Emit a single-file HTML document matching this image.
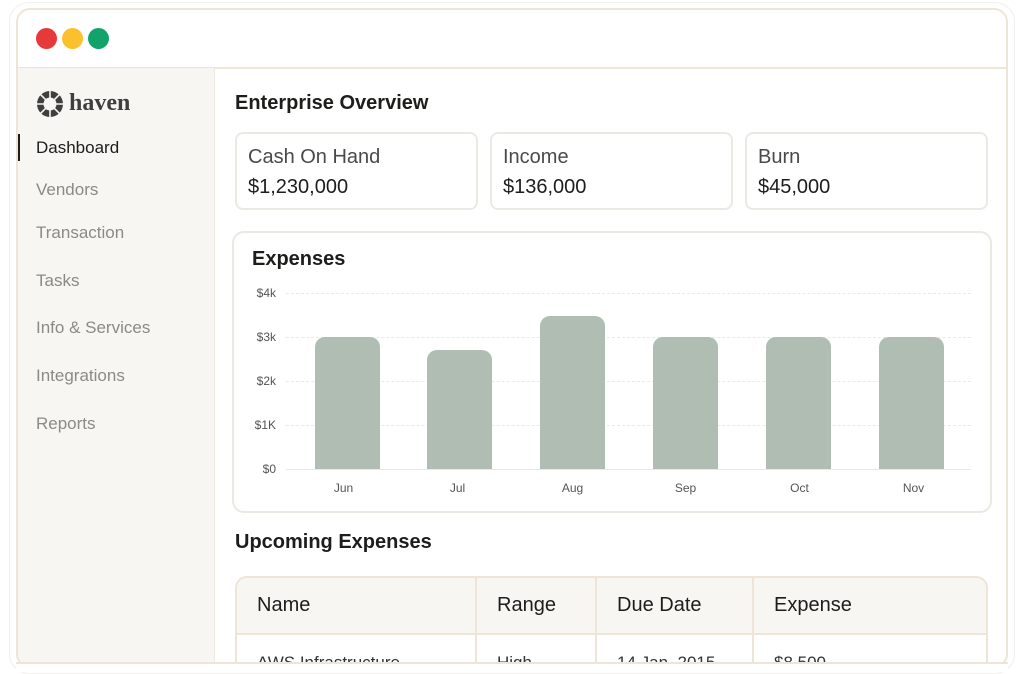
<!DOCTYPE html>
<html><head><meta charset="utf-8"><style>
*{margin:0;padding:0;box-sizing:border-box}
body{width:1024px;height:672px;background:#fff;font-family:"Liberation Sans",sans-serif;position:relative;overflow:hidden}
.abs{position:absolute}
.win{left:16px;top:8px;width:992px;height:660px;border:2px solid #efe4d8;border-radius:14px;background:#fff;overflow:hidden}
.outer{left:9px;top:2px;width:1006px;height:672px;border:1px solid #f1efec;border-radius:20px}
.side{left:0;top:58px;width:197px;height:620px;background:#f8f6f2;border-right:1px solid #efe8df}
.nav{left:18px;font-size:17px;color:#8a8a87}
.card{border:2px solid #ece9e4;border-radius:8px;background:#fff}
.card .l{position:absolute;left:11px;top:12px;font-size:20px;color:#4a4a48}
.card .v{position:absolute;left:11px;top:42px;font-size:20px;color:#1d1d1b}
.grid{left:286px;width:685px;border-top:1px dashed #f3e6dc}
.yl{font-size:12px;color:#555;width:40px;text-align:right;left:236px}
.bar{background:#afbdb3;border-radius:10px 10px 0 0;width:65px}
.xl{font-size:12px;color:#555;width:65px;text-align:center;top:481px}
.h{font-size:20px;color:#1d1d1b;font-weight:bold}
th{font-weight:normal;text-align:left;font-size:20px;color:#1d1d1b;padding-left:20px;height:56px;background:#f8f6f2;border-right:2px solid #efe4d8;border-bottom:2px solid #efe4d8}
td{font-size:17px;color:#333;padding-left:20px;padding-top:18px;border-right:2px solid #efe4d8;vertical-align:top}
</style></head><body>
<div class="abs outer"></div>
<div class="abs win">
 <div class="abs" style="left:18px;top:18px;width:21px;height:21px;border-radius:50%;background:#e5393a"></div>
 <div class="abs" style="left:44px;top:18px;width:21px;height:21px;border-radius:50%;background:#fbc02d"></div>
 <div class="abs" style="left:70px;top:18px;width:21px;height:21px;border-radius:50%;background:#12a36a"></div>
 <div class="abs" style="left:0;top:57px;width:992px;height:2px;background:#efe4d8"></div>
 <div class="abs side">
  <svg class="abs" style="left:18px;top:22px" width="28" height="28" viewBox="0 0 28 28"><circle cx="14" cy="14" r="13" fill="#3f3f3d"/><circle cx="14" cy="14" r="6.5" fill="#f8f6f2"/><g stroke="#f8f6f2" stroke-width="1.6"><line x1="14" y1="0" x2="14" y2="8"/><line x1="14" y1="20" x2="14" y2="28"/><line x1="0" y1="14" x2="8" y2="14"/><line x1="20" y1="14" x2="28" y2="14"/><line x1="4" y1="4" x2="9.8" y2="9.8"/><line x1="18.2" y1="18.2" x2="24" y2="24"/><line x1="24" y1="4" x2="18.2" y2="9.8"/><line x1="4" y1="24" x2="9.8" y2="18.2"/></g></svg>
  <div class="abs" style="left:51px;top:22px;font-family:'Liberation Serif',serif;font-weight:bold;font-size:24px;color:#3f3f3d">haven</div>
  <div class="abs" style="left:0;top:66px;width:2px;height:27px;background:#1d1d1b"></div>
  <div class="abs nav" style="top:70px;color:#1d1d1b">Dashboard</div>
  <div class="abs nav" style="top:112px">Vendors</div>
  <div class="abs nav" style="top:155px">Transaction</div>
  <div class="abs nav" style="top:203px">Tasks</div>
  <div class="abs nav" style="top:250px">Info &amp; Services</div>
  <div class="abs nav" style="top:298px">Integrations</div>
  <div class="abs nav" style="top:346px">Reports</div>
 </div>
</div>
<div class="abs h" style="left:235px;top:92px">Enterprise Overview</div>
<div class="abs card" style="left:235px;top:132px;width:243px;height:78px"><div class="l">Cash On Hand</div><div class="v">$1,230,000</div></div>
<div class="abs card" style="left:490px;top:132px;width:243px;height:78px"><div class="l">Income</div><div class="v">$136,000</div></div>
<div class="abs card" style="left:745px;top:132px;width:243px;height:78px"><div class="l">Burn</div><div class="v">$45,000</div></div>
<div class="abs card" style="left:232px;top:231px;width:760px;height:282px;border-radius:12px"></div>
<div class="abs h" style="left:252px;top:248px">Expenses</div>
<div class="abs grid" style="top:293px"></div><div class="abs grid" style="top:337px"></div><div class="abs grid" style="top:381px"></div><div class="abs grid" style="top:425px"></div>
<div class="abs" style="left:286px;top:469px;width:685px;height:1px;background:#ece7e2"></div>
<div class="abs yl" style="top:286px">$4k</div><div class="abs yl" style="top:330px">$3k</div><div class="abs yl" style="top:374px">$2k</div><div class="abs yl" style="top:418px">$1K</div><div class="abs yl" style="top:462px">$0</div>
<div class="abs bar" style="left:315px;top:337px;height:132px"></div>
<div class="abs bar" style="left:427px;top:350px;height:119px"></div>
<div class="abs bar" style="left:540px;top:316px;height:153px"></div>
<div class="abs bar" style="left:653px;top:337px;height:132px"></div>
<div class="abs bar" style="left:766px;top:337px;height:132px"></div>
<div class="abs bar" style="left:879px;top:337px;height:132px"></div>
<div class="abs xl" style="left:311px">Jun</div><div class="abs xl" style="left:425px">Jul</div><div class="abs xl" style="left:540px">Aug</div><div class="abs xl" style="left:653px">Sep</div><div class="abs xl" style="left:767px">Oct</div><div class="abs xl" style="left:881px">Nov</div>
<div class="abs h" style="left:235px;top:531px">Upcoming Expenses</div>
<div class="abs" style="left:235px;top:576px;width:753px;height:90px;border:2px solid #efe4d8;border-radius:12px 12px 0 0;overflow:hidden">
<table style="border-collapse:collapse;width:100%">
<tr><th style="width:239px">Name</th><th style="width:120px">Range</th><th style="width:157px">Due Date</th><th style="border-right:none">Expense</th></tr>
<tr><td>AWS Infrastructure</td><td>High</td><td>14 Jan, 2015</td><td style="border-right:none">$8,500</td></tr>
</table></div>
<div class="abs" style="left:16px;top:662px;width:992px;height:10px;background:#fff;border-top:2px solid #efe4d8"></div>
</body></html>
